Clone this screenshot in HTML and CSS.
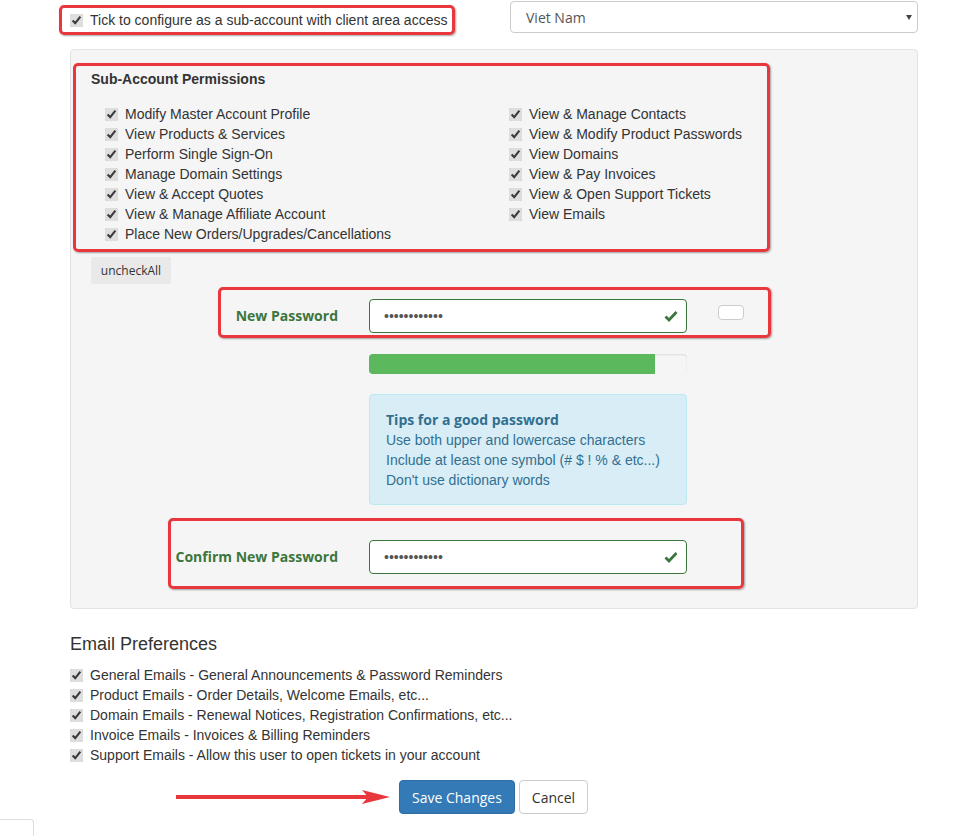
FILE: index.html
```html
<!DOCTYPE html>
<html lang="en">
<head>
    <meta charset="UTF-8">
    <meta name="viewport" content="width=device-width, initial-scale=1.0">
    <title>Sub-Account Settings</title>
    <link rel="stylesheet" href="styles.css">
</head>
<body>
    <div class="page">
        <!-- top row -->
        <div class="top-row">
            <div class="mark mark-top">
                <label class="check"><input type="checkbox" checked>Tick to configure as a sub-account with client area access</label>
            </div>
            <div class="select-wrap">
                <select class="select">
                    <option>Viet Nam</option>
                </select>
            </div>
        </div>

        <!-- sub account panel -->
        <div class="panel">
            <div class="mark mark-perms">
                <div class="perms-title">Sub-Account Permissions</div>
                <div class="perms-grid">
                    <div class="perms-col">
                        <label class="check"><input type="checkbox" checked>Modify Master Account Profile</label>
                        <label class="check"><input type="checkbox" checked>View Products &amp; Services</label>
                        <label class="check"><input type="checkbox" checked>Perform Single Sign-On</label>
                        <label class="check"><input type="checkbox" checked>Manage Domain Settings</label>
                        <label class="check"><input type="checkbox" checked>View &amp; Accept Quotes</label>
                        <label class="check"><input type="checkbox" checked>View &amp; Manage Affiliate Account</label>
                        <label class="check"><input type="checkbox" checked>Place New Orders/Upgrades/Cancellations</label>
                    </div>
                    <div class="perms-col">
                        <label class="check"><input type="checkbox" checked>View &amp; Manage Contacts</label>
                        <label class="check"><input type="checkbox" checked>View &amp; Modify Product Passwords</label>
                        <label class="check"><input type="checkbox" checked>View Domains</label>
                        <label class="check"><input type="checkbox" checked>View &amp; Pay Invoices</label>
                        <label class="check"><input type="checkbox" checked>View &amp; Open Support Tickets</label>
                        <label class="check"><input type="checkbox" checked>View Emails</label>
                    </div>
                </div>
            </div>

            <button class="uncheck-btn">uncheckAll</button>

            <!-- new password -->
            <div class="mark mark-newpw">
                <label class="pw-label pw-label-new">New Password</label>
                <div class="pw-input">
                    <input type="password" value="abcdefghijkl">
                    <svg class="pw-ok" width="14" height="12" viewBox="0 0 14 12"><path d="M1.5 6.5 L5 10 L12.5 2" fill="none" stroke="#3c763d" stroke-width="2.8"/></svg>
                </div>
                <button class="tiny-btn"></button>
            </div>

            <div class="strength">
                <div class="strength-fill" style="width: 90%"></div>
            </div>

            <div class="tips">
                <strong>Tips for a good password</strong>
                <span>Use both upper and lowercase characters</span>
                <span>Include at least one symbol (# $ ! % &amp; etc...)</span>
                <span>Don't use dictionary words</span>
            </div>

            <!-- confirm password -->
            <div class="mark mark-confirm">
                <label class="pw-label pw-label-confirm">Confirm New Password</label>
                <div class="pw-input">
                    <input type="password" value="abcdefghijkl">
                    <svg class="pw-ok" width="14" height="12" viewBox="0 0 14 12"><path d="M1.5 6.5 L5 10 L12.5 2" fill="none" stroke="#3c763d" stroke-width="2.8"/></svg>
                </div>
            </div>
        </div>

        <!-- email preferences -->
        <h2 class="email-title">Email Preferences</h2>
        <div class="email-list">
            <label class="check"><input type="checkbox" checked>General Emails - General Announcements &amp; Password Reminders</label>
            <label class="check"><input type="checkbox" checked>Product Emails - Order Details, Welcome Emails, etc...</label>
            <label class="check"><input type="checkbox" checked>Domain Emails - Renewal Notices, Registration Confirmations, etc...</label>
            <label class="check"><input type="checkbox" checked>Invoice Emails - Invoices &amp; Billing Reminders</label>
            <label class="check"><input type="checkbox" checked>Support Emails - Allow this user to open tickets in your account</label>
        </div>

        <div class="actions">
            <svg class="arrow" width="214" height="16" viewBox="0 0 214 16">
                <path d="M0 8 H196" stroke="#e8383d" stroke-width="4"/>
                <path d="M186 1 L214 8 L186 15 L192 8 Z" fill="#e8383d"/>
            </svg>
            <button class="btn btn-primary">Save Changes</button>
            <button class="btn btn-default">Cancel</button>
        </div>
    </div>

    <div class="corner"></div>
</body>
</html>
```

FILE: styles.css
```css
* {
    margin: 0;
    padding: 0;
    box-sizing: border-box;
}

body {
    background: #ffffff;
    color: #333;
    font-family: 'Liberation Sans', Arial, sans-serif;
    font-size: 14px;
    line-height: 20px;
}

.page {
    width: 848px;
    margin-left: 70px;
}

/* red highlight boxes */
.mark {
    border: 3px solid #e8383d;
    border-radius: 5px;
    box-shadow: 1px 1px 2px rgba(0,0,0,0.35);
}

/* checkboxes */
.check {
    display: flex;
    align-items: center;
    height: 20px;
    white-space: nowrap;
}

.check input {
    width: 13px;
    height: 13px;
    margin: 0 7px 0 0;
    accent-color: #dedede;
}

/* top row */
.top-row {
    display: flex;
    justify-content: space-between;
    align-items: flex-start;
}

.mark-top {
    margin: 5px 0 0 -11px;
    width: 396px;
    height: 30px;
    padding: 2px 0 0 8px;
}

.select-wrap {
    position: relative;
    margin-top: 1px;
    width: 408px;
}

.select-wrap::after {
    content: "";
    position: absolute;
    right: 6px;
    top: 14px;
    border-left: 3px solid transparent;
    border-right: 3px solid transparent;
    border-top: 5px solid #444;
}

.select {
    appearance: none;
    -webkit-appearance: none;
    width: 100%;
    height: 32px;
    padding: 0 15px;
    border: 1px solid #ccc;
    border-radius: 4px;
    background: #fff;
    color: #555;
    font-family: 'Open Sans', sans-serif;
    font-size: 14px;
}

/* panel */
.panel {
    margin-top: 14px;
    border: 1px solid #e3e3e3;
    border-radius: 4px;
    background: #f5f5f5;
    padding: 13px 0 19px 2px;
}

.mark-perms {
    width: 697px;
    height: 189px;
    padding: 3px 0 0 15px;
}

.perms-title {
    font-weight: bold;
    line-height: 20px;
}

.perms-grid {
    display: flex;
    margin-top: 15px;
    padding-left: 14px;
}

.perms-col {
    flex-shrink: 0;
}

.perms-col:first-child {
    width: 404px;
}

.uncheck-btn {
    display: block;
    margin: 5px 0 0 18px;
    width: 80px;
    height: 27px;
    border: none;
    border-radius: 2px;
    background: #e9e9e9;
    color: #333;
    font-family: 'Open Sans', sans-serif;
    font-size: 12px;
}

/* password rows */
.mark-newpw,
.mark-confirm {
    display: flex;
    align-items: center;
}

.mark-newpw {
    margin: 3px 0 0 145px;
    width: 553px;
    height: 51px;
    padding-top: 7px;
}

.mark-confirm {
    margin: 13px 0 0 95px;
    width: 576px;
    height: 71px;
    padding-top: 6px;
}

.pw-label {
    text-align: right;
    color: #3c763d;
    font-family: 'Open Sans', sans-serif;
    font-weight: bold;
    font-size: 14px;
    margin-right: 31px;
}

.pw-label-new {
    width: 117px;
}

.pw-label-confirm {
    width: 167px;
}

.pw-input {
    position: relative;
    width: 318px;
    height: 34px;
}

.pw-input input {
    width: 100%;
    height: 100%;
    padding: 0 34px 0 14px;
    border: 1px solid #3c763d;
    border-radius: 4px;
    background: #fff;
    color: #555;
    font-family: 'Liberation Sans', sans-serif;
    font-size: 14px;
    outline: none;
}

.pw-ok {
    position: absolute;
    right: 9px;
    top: 11px;
}

.tiny-btn {
    align-self: flex-start;
    margin: 8px 0 0 31px;
    width: 26px;
    height: 15px;
    border: 1px solid #ccc;
    border-radius: 4px;
    background: #fff;
}

.strength {
    margin: 16px 0 0 296px;
    width: 318px;
    height: 20px;
    border-radius: 4px;
    background: #f5f5f5;
    box-shadow: inset 0 1px 2px rgba(0,0,0,0.1);
    overflow: hidden;
}

.strength-fill {
    height: 100%;
    background: #5cb85c;
}

.tips {
    display: flex;
    flex-direction: column;
    margin: 20px 0 0 296px;
    width: 318px;
    height: 111px;
    padding: 15px 16px 14px;
    border: 1px solid #bce8f1;
    border-radius: 4px;
    background: #d9edf7;
    color: #31708f;
}

.tips strong {
    font-family: 'Open Sans', sans-serif;
    font-weight: bold;
    font-size: 14px;
}

/* email preferences */
.email-title {
    margin-top: 25px;
    font-size: 18px;
    font-weight: normal;
    line-height: 20px;
}

.email-list {
    margin-top: 11px;
}

/* buttons */
.actions {
    display: flex;
    align-items: center;
    margin: 15px 0 0 106px;
}

.arrow {
    margin-right: 9px;
}

.btn {
    height: 34px;
    padding: 0 12px;
    border-radius: 4px;
    font-family: 'Open Sans', sans-serif;
    font-size: 14px;
}

.btn-primary {
    border: 1px solid #2e6da4;
    background: #337ab7;
    color: #fff;
    margin-right: 4px;
}

.btn-default {
    border: 1px solid #ccc;
    background: #fff;
    color: #333;
}

.corner {
    margin-top: 5px;
    width: 34px;
    height: 20px;
    border-top: 1px solid #ddd;
    border-right: 1px solid #ddd;
    border-top-right-radius: 4px;
}
```
